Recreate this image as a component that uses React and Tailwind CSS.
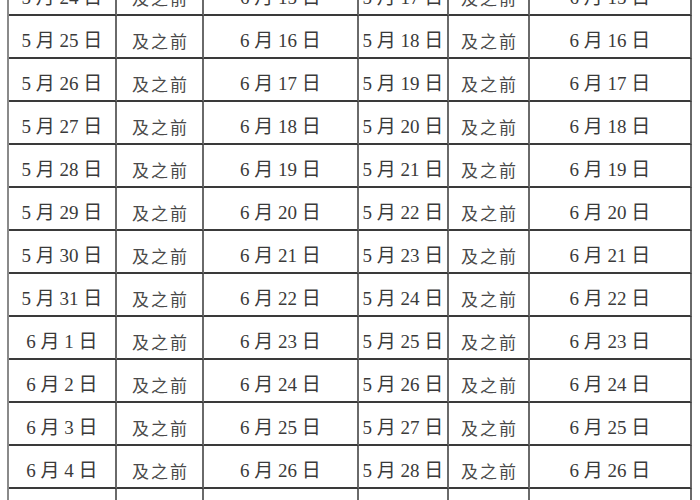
const left = ["5月24日","5月25日","5月26日","5月27日","5月28日","5月29日","5月30日","5月31日","6月1日","6月2日","6月3日","6月4日","6月5日"];

function fmt(s) {
  const m = s.match(/(\d+)月(\d+)日/);
  return `${m[1]} 月 ${m[2]} 日`;
}

const rows = left.map((l, i) => ({
  a: fmt(l),
  c: fmt(`6月${15 + i}日`),
  d: fmt(`5月${17 + i}日`),
  f: fmt(`6月${15 + i}日`),
}));

function DateCell({ text }) {
  return (
    <div className="h-[43px] border-r-2 border-b-2 border-r-[#6a6a6a] border-b-[#3a3a3a] flex justify-center items-start pt-[13px] text-[19px] leading-[24px] text-[#3a3a3a] whitespace-nowrap">
      {text}
    </div>
  );
}

function JzqCell() {
  return (
    <div className="h-[43px] border-r-2 border-b-2 border-r-[#6a6a6a] border-b-[#3a3a3a] flex justify-center items-start pt-[15px] pl-[2px] text-[17px] leading-[24px] tracking-[2px] text-[#4a4a4a] whitespace-nowrap">
      及之前
    </div>
  );
}

export default function App() {
  return (
    <div
      className="w-[700px] h-[500px] overflow-hidden bg-white"
      style={{ fontFamily: '"Liberation Serif", "Noto Sans CJK SC", serif' }}
    >
      <div className="ml-[7px] mt-[-27px] w-[685px] border-l-2 border-l-[#8a8a8a] grid grid-cols-[108px_87px_155px_90px_81px_162px]">
        {rows.map((r, i) => (
          <div key={i} className="contents">
            <DateCell text={r.a} />
            <JzqCell />
            <DateCell text={r.c} />
            <DateCell text={r.d} />
            <JzqCell />
            <DateCell text={r.f} />
          </div>
        ))}
      </div>
    </div>
  );
}
